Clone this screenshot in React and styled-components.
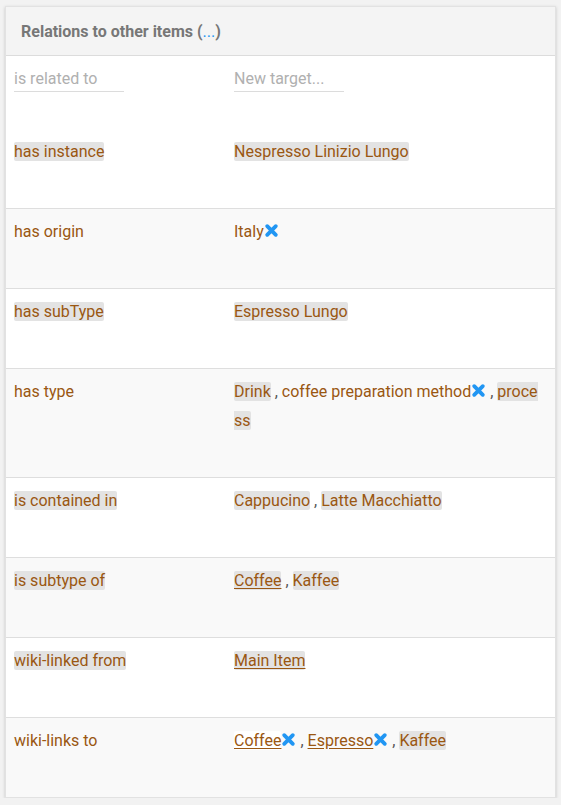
import React from "react";
import styled, { createGlobalStyle } from "styled-components";

const Global = createGlobalStyle`
  html, body { margin: 0; padding: 0; background: #f2f2f2; }
  body { font-family: Roboto, "Liberation Sans", sans-serif; }
`;

const Card = styled.div`
  margin: 6px 5px 0 5px;
  width: 551px;
  box-sizing: border-box;
  background: #fff;
  border: 1px solid #e2e2e2;
  box-shadow: 0 1px 3px rgba(0, 0, 0, 0.18);
`;

const Header = styled.div`
  height: 48px;
  background: #f4f4f4;
  border-bottom: 1px solid #dcdcdc;
  display: flex;
  align-items: center;
  padding-left: 15px;
  font-size: 16px;
  font-weight: 700;
  color: #777;
`;

const Dots = styled.span`
  color: #2196f3;
  font-weight: 400;
`;

const Row = styled.div`
  display: grid;
  grid-template-columns: 220px 1fr;
  background: ${(p) => (p.$alt ? "#f9f9f9" : "#fff")};
  border-top: ${(p) => (p.$first ? "none" : "1px solid #dedede")};
`;

const InputRow = styled.div`
  display: grid;
  grid-template-columns: 220px 1fr;
  padding: 10px 0 37px;
`;

const Input = styled.input`
  width: 110px;
  height: 26px;
  box-sizing: border-box;
  margin-left: 8px;
  border: none;
  border-bottom: 1px solid #dcdcdc;
  background: transparent;
  padding: 0;
  font-family: Roboto, "Liberation Sans", sans-serif;
  font-size: 16px;
  color: #333;
  outline: none;
  &::placeholder { color: #b0b0b0; }
`;

const Cell = styled.div`
  padding: 8px 12px 42px 8px;
  font-size: 16px;
  line-height: 29px;
  color: #9a5712;
  word-break: break-all;
`;

const Tag = styled.span`
  background: ${(p) => (p.$bg === "none" ? "transparent" : p.$bg === "white" ? "#fff" : "#e3e3e3")};
  text-decoration: ${(p) => (p.$u ? "underline" : "none")};
  text-underline-offset: 2px;
  border-radius: 2px;
`;

const Sep = styled.span`
  color: #555;
`;

const XIcon = () => (
  <svg width="15" height="15" viewBox="0 0 14 14" style={{ verticalAlign: "-1px" }}>
    <path d="M3 3 L11 11 M11 3 L3 11" stroke="#2196f3" strokeWidth="3.6" strokeLinecap="round" />
  </svg>
);

const rows = [
  { label: "has instance", lbg: "gray", items: [{ t: "Nespresso Linizio Lungo", bg: "gray" }] },
  { label: "has origin", lbg: "none", items: [{ t: "Italy", bg: "none", x: true }] },
  { label: "has subType", lbg: "gray", items: [{ t: "Espresso Lungo", bg: "gray" }] },
  {
    label: "has type",
    lbg: "none",
    items: [
      { t: "Drink", bg: "gray" },
      { t: "coffee preparation method", bg: "none", x: true },
      { t: "process", bg: "gray" },
    ],
  },
  { label: "is contained in", lbg: "gray", items: [{ t: "Cappucino", bg: "gray" }, { t: "Latte Macchiatto", bg: "gray" }] },
  { label: "is subtype of", lbg: "gray", items: [{ t: "Coffee", bg: "gray", u: true }, { t: "Kaffee", bg: "gray" }] },
  { label: "wiki-linked from", lbg: "gray", items: [{ t: "Main Item", bg: "gray", u: true }] },
  {
    label: "wiki-links to",
    lbg: "none",
    items: [
      { t: "Coffee", bg: "white", u: true, x: true },
      { t: "Espresso", bg: "none", u: true, x: true },
      { t: "Kaffee", bg: "gray" },
    ],
  },
];

export default function App() {
  return (
    <>
      <Global />
      <Card>
        <Header>
          <span>
            Relations to other items (<Dots>...</Dots>)
          </span>
        </Header>
        <InputRow>
          <Input placeholder="is related to" />
          <Input placeholder="New target..." />
        </InputRow>
        {rows.map((r, i) => (
          <Row key={r.label} $alt={i % 2 === 1} $first={i === 0}>
            <Cell>
              <Tag $bg={r.lbg}>{r.label}</Tag>
            </Cell>
            <Cell>
              {r.items.map((it, j) => (
                <React.Fragment key={j}>
                  {j > 0 && <Sep> , </Sep>}
                  <Tag $bg={it.bg} $u={it.u}>{it.t}</Tag>
                  {it.x && <XIcon />}
                </React.Fragment>
              ))}
            </Cell>
          </Row>
        ))}
      </Card>
    </>
  );
}
